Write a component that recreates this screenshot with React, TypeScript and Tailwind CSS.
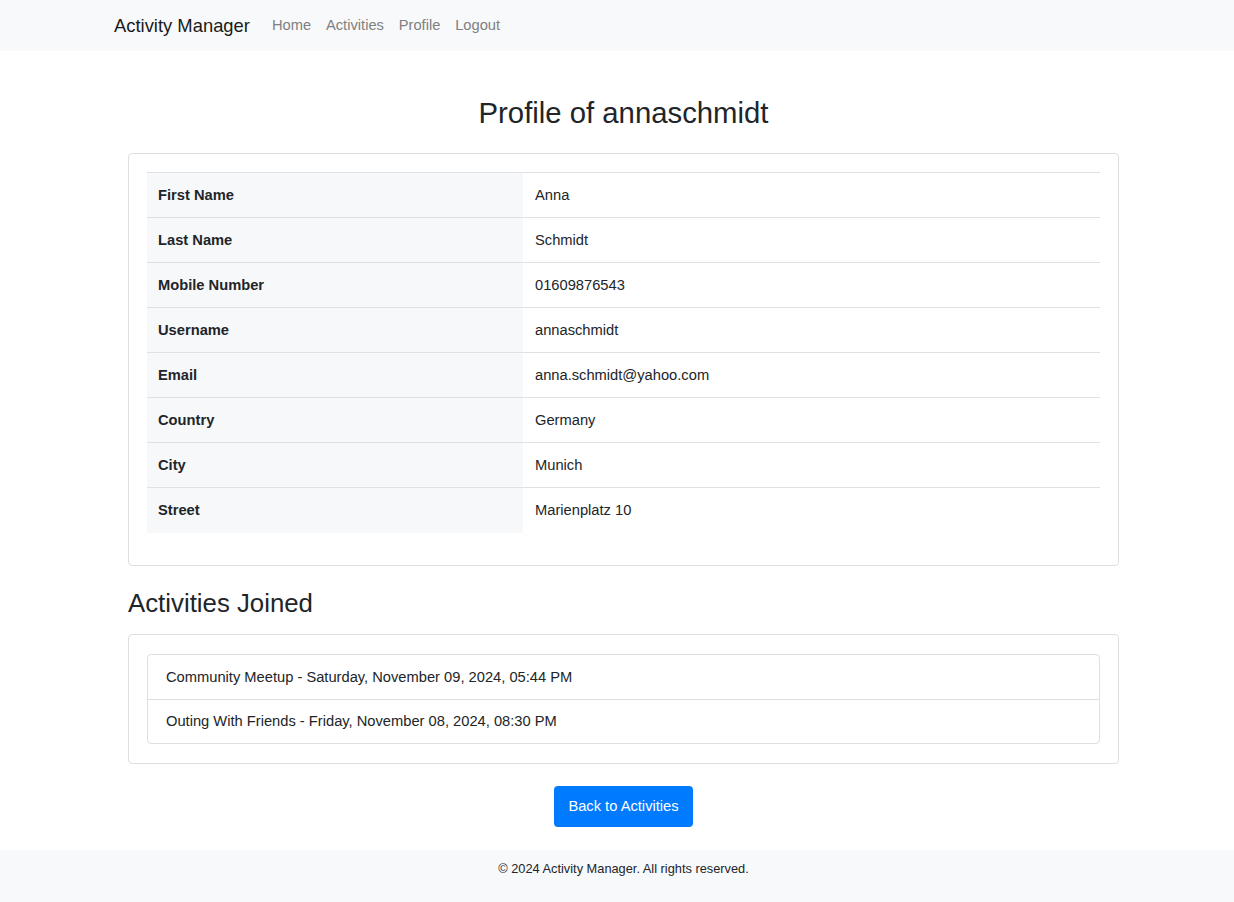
import React from 'react';

const profile = [
    { label: 'First Name', value: 'Anna' },
    { label: 'Last Name', value: 'Schmidt' },
    { label: 'Mobile Number', value: '01609876543' },
    { label: 'Username', value: 'annaschmidt' },
    { label: 'Email', value: 'anna.schmidt@yahoo.com' },
    { label: 'Country', value: 'Germany' },
    { label: 'City', value: 'Munich' },
    { label: 'Street', value: 'Marienplatz 10' },
];

const activities = [
    'Community Meetup - Saturday, November 09, 2024, 05:44 PM',
    'Outing With Friends - Friday, November 08, 2024, 08:30 PM',
];

export default function App() {
    return (
        <div className="min-h-screen bg-white text-[#212529] text-[14.7px] leading-[1.5] font-['Liberation_Sans',Arial,sans-serif]">
            {/* Navbar */}
            <nav className="bg-[#f8f9fa] h-[51px] flex items-center pl-[114px]">
                <a href="#" className="text-[18.4px] text-[#1a1a1a] mr-[14.7px]">Activity Manager</a>
                <ul className="flex">
                    {['Home', 'Activities', 'Profile', 'Logout'].map((l) => (
                        <li key={l}>
                            <a href="#" className="px-[7.4px] text-[#7f8081]">{l}</a>
                        </li>
                    ))}
                </ul>
            </nav>

            {/* Main */}
            <div className="ml-[128px] w-[991px] pt-[44px]">
                <h2 className="text-[29.3px] leading-[1.2] text-center mb-[23px]">Profile of annaschmidt</h2>

                <div className="border border-[#dfdfdf] rounded-[4px] px-[18px] pt-[18px] pb-[32px]">
                    <table className="w-full border-collapse">
                        <tbody>
                            {profile.map((row) => (
                                <tr key={row.label} className="border-t border-[#dee2e6]">
                                    <th className="w-[376px] bg-[#f7f8fa] text-left font-bold px-[11px] h-[45px] align-middle">
                                        {row.label}
                                    </th>
                                    <td className="px-[12px] h-[45px] align-middle">{row.value}</td>
                                </tr>
                            ))}
                        </tbody>
                    </table>
                </div>

                <h3 className="text-[25.8px] leading-[1.2] mt-[22px] mb-[15px]">Activities Joined</h3>

                <div className="border border-[#dfdfdf] rounded-[4px] px-[18px] py-[19px]">
                    <ul className="border border-[#dfdfdf] rounded-[4px]">
                        {activities.map((a, i) => (
                            <li
                                key={a}
                                className={`h-[44px] flex items-center px-[18px] ${i > 0 ? 'border-t border-[#dfdfdf]' : ''}`}
                            >
                                {a}
                            </li>
                        ))}
                    </ul>
                </div>

                <div className="flex justify-center mt-[22px]">
                    <button className="bg-[#007bff] text-white rounded-[4px] px-[14.5px] h-[41px]">
                        Back to Activities
                    </button>
                </div>
            </div>

            {/* Footer */}
            <footer className="bg-[#f8f9fa] mt-[23px] pt-[9px] pb-[27px] pl-[13px] text-center text-[12.8px]">
                © 2024 Activity Manager. All rights reserved.
            </footer>
        </div>
    );
}
